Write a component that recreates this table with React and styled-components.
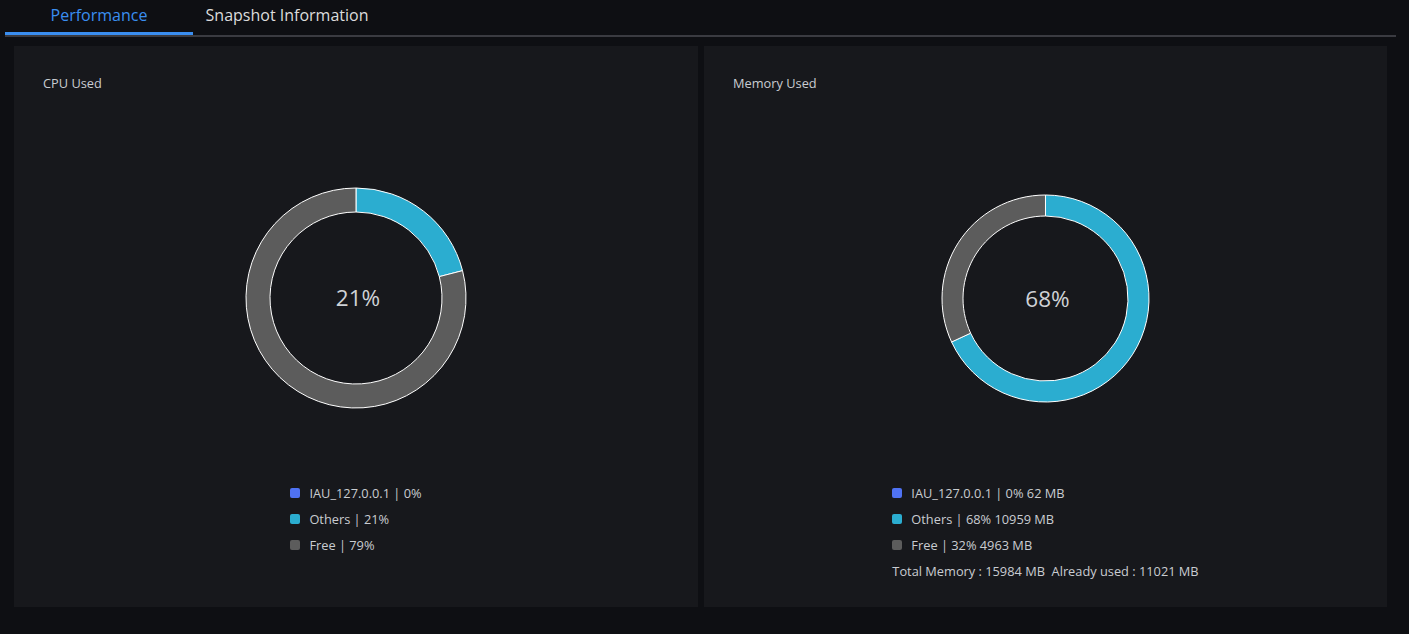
import React, { useState } from "react";
import styled, { createGlobalStyle } from "styled-components";

const Global = createGlobalStyle`
  html, body { margin: 0; padding: 0; background: #0e0f13; }
  body { font-family: "Open Sans", "Noto Sans", sans-serif; }
  * { box-sizing: border-box; }
`;

const Page = styled.div`
  width: 1409px;
  height: 634px;
  padding: 0 13px 0 5px;
  background: #0e0f13;
  display: flex;
  flex-direction: column;
`;

const TabList = styled.div`
  display: flex;
  border-bottom: 2px solid #3a3b41;
`;

const Tab = styled.button`
  width: 188px;
  height: 35px;
  padding: 0 0 2px;
  margin: 0;
  border: none;
  border-bottom: 3px solid ${(p) => (p.$active ? "#3a8ef0" : "transparent")};
  background: transparent;
  color: ${(p) => (p.$active ? "#3a8ef0" : "#dcdcdc")};
  font-family: "Open Sans", sans-serif;
  font-size: 16px;
  cursor: pointer;
  display: flex;
  align-items: center;
  justify-content: center;
`;

const Panels = styled.div`
  display: grid;
  grid-template-columns: 684px 683px;
  gap: 6px;
  padding: 9px 9px 0;
`;

const Panel = styled.section`
  height: 561px;
  background: #17181c;
  padding: 29px 29px 0;
  display: flex;
  flex-direction: column;
`;

const Title = styled.div`
  color: #c9ccd1;
  font-size: 12.8px;
  line-height: 16px;
`;

const ChartArea = styled.div`
  height: 300px;
  margin-top: 57px;
  display: flex;
  align-items: center;
  justify-content: center;
`;

const Legend = styled.div`
  margin-top: 32px;
  align-self: center;
  display: flex;
  flex-direction: column;
`;

const LegendRow = styled.div`
  display: flex;
  align-items: center;
  height: 26px;
  color: #c9ccd1;
  font-size: 12.8px;
  white-space: pre;
`;

const Swatch = styled.span`
  width: 10px;
  height: 10px;
  border-radius: 2px;
  background: ${(p) => p.$color};
  margin-right: 9px;
  flex: none;
`;

const COLORS = { iau: "#4f72f3", others: "#2badd0", free: "#5c5c5c" };

function arcPath(cx, cy, R, r, a0, a1) {
  const toXY = (rad, a) => {
    const t = (a - 90) * (Math.PI / 180);
    return [cx + rad * Math.cos(t), cy + rad * Math.sin(t)];
  };
  const large = a1 - a0 > 180 ? 1 : 0;
  const [x0, y0] = toXY(R, a0);
  const [x1, y1] = toXY(R, a1);
  const [x2, y2] = toXY(r, a1);
  const [x3, y3] = toXY(r, a0);
  return `M${x0} ${y0} A${R} ${R} 0 ${large} 1 ${x1} ${y1} L${x2} ${y2} A${r} ${r} 0 ${large} 0 ${x3} ${y3} Z`;
}

function Donut({ R, r, segments, label }) {
  const size = R * 2 + 2;
  const c = size / 2;
  let acc = 0;
  return (
    <svg width={size} height={size} viewBox={`0 0 ${size} ${size}`}>
      {segments.map((s, i) => {
        const a0 = acc * 3.6;
        acc += s.value;
        const a1 = acc * 3.6;
        if (a1 - a0 <= 0) return null;
        return (
          <path
            key={i}
            d={arcPath(c, c, R, r, a0, Math.min(a1, 359.99))}
            fill={s.color}
            stroke="#ffffff"
            strokeWidth="1"
            strokeLinejoin="round"
          />
        );
      })}
      <text
        x={c + 2}
        y={c + 2}
        textAnchor="middle"
        dominantBaseline="middle"
        fill="#cfd2d6"
        fontSize="22.5"
        fontFamily="Open Sans, sans-serif"
      >
        {label}
      </text>
    </svg>
  );
}

export default function App() {
  const [tab, setTab] = useState(0);
  return (
    <Page>
      <Global />
      <TabList>
        <Tab $active={tab === 0} onClick={() => setTab(0)}>Performance</Tab>
        <Tab $active={tab === 1} onClick={() => setTab(1)}>Snapshot Information</Tab>
      </TabList>
      <Panels>
        <Panel>
          <Title>CPU Used</Title>
          <ChartArea>
            <Donut
              R={110}
              r={86}
              label="21%"
              segments={[
                { value: 0, color: COLORS.iau },
                { value: 21, color: COLORS.others },
                { value: 79, color: COLORS.free },
              ]}
            />
          </ChartArea>
          <Legend>
            <LegendRow><Swatch $color={COLORS.iau} />IAU_127.0.0.1 | 0%</LegendRow>
            <LegendRow><Swatch $color={COLORS.others} />Others | 21%</LegendRow>
            <LegendRow><Swatch $color={COLORS.free} />Free | 79%</LegendRow>
          </Legend>
        </Panel>
        <Panel>
          <Title>Memory Used</Title>
          <ChartArea>
            <Donut
              R={103.5}
              r={82.5}
              label="68%"
              segments={[
                { value: 0, color: COLORS.iau },
                { value: 68.1, color: COLORS.others },
                { value: 31.9, color: COLORS.free },
              ]}
            />
          </ChartArea>
          <Legend>
            <LegendRow><Swatch $color={COLORS.iau} />IAU_127.0.0.1 | 0% 62 MB</LegendRow>
            <LegendRow><Swatch $color={COLORS.others} />Others | 68% 10959 MB</LegendRow>
            <LegendRow><Swatch $color={COLORS.free} />Free | 32% 4963 MB</LegendRow>
            <LegendRow>{"Total Memory : 15984 MB  Already used : 11021 MB"}</LegendRow>
          </Legend>
        </Panel>
      </Panels>
    </Page>
  );
}
